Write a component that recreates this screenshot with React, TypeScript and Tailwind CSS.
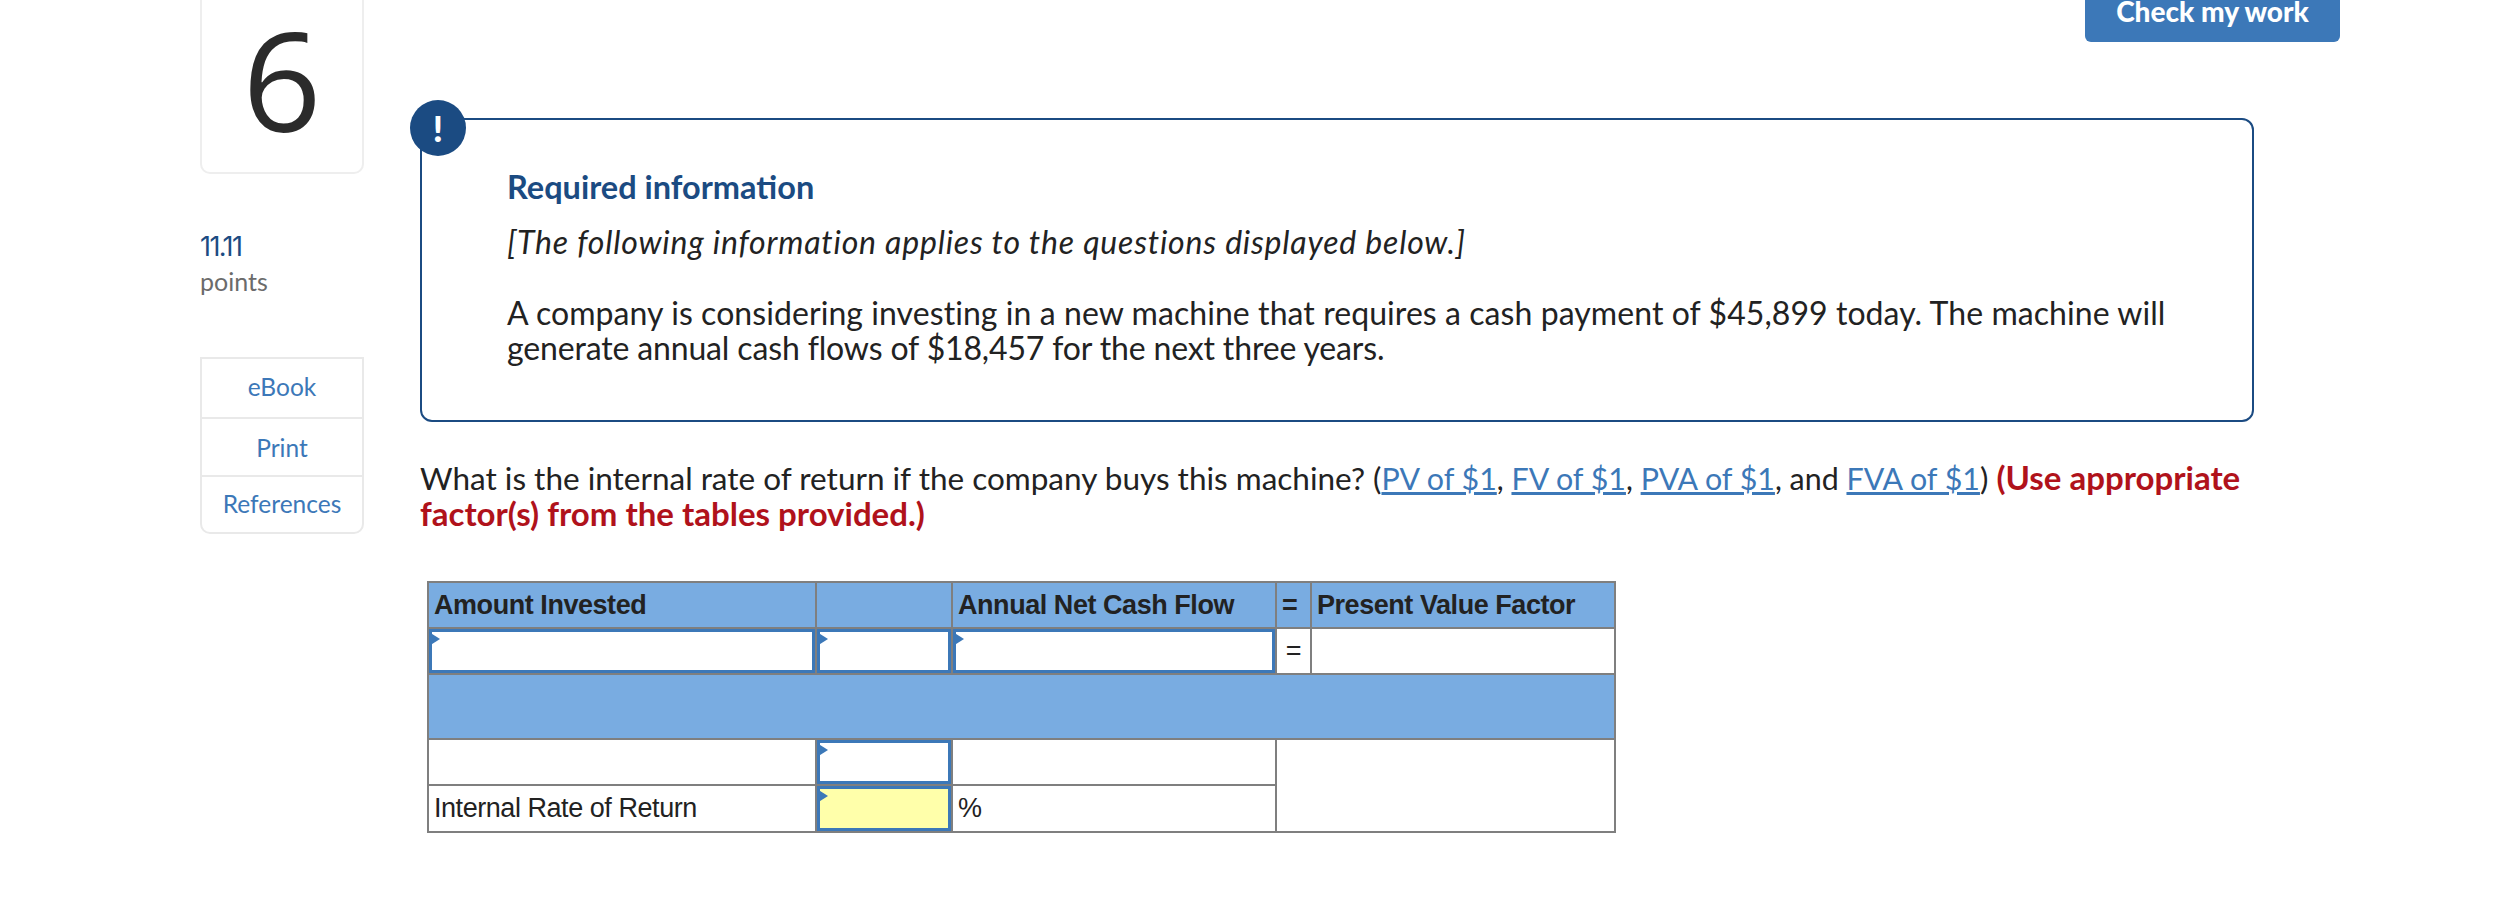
import React from 'react'

const body = { fontFamily: 'Lato, "Noto Sans", sans-serif' }
const arial = { fontFamily: '"Liberation Sans", Arial, sans-serif' }
const digit = { fontFamily: '"Open Sans", sans-serif' }
const inter = { fontFamily: 'Inter, sans-serif' }

function InputCell({ yellow = false, height }: { yellow?: boolean; height: string }) {
  return (
    <div className={`relative ${height} w-full border-[3px] border-[#3c78b8] ${yellow ? 'bg-[#ffffaa]' : 'bg-white'}`}>
      <svg className="absolute -left-[3px] top-0" width="11" height="14" viewBox="0 0 11 14">
        <path d="M0 0 L11 7 L0 14 Z" fill="#3c78b8" />
      </svg>
    </div>
  )
}

const th = 'border-2 border-[#7f7f7f] bg-[#79ace1] px-[5px] py-0 text-left font-bold text-[#222]'
const td = 'border-2 border-[#7f7f7f] bg-white px-[5px] py-0 text-[#222]'
const inputTd = 'border-2 border-[#7f7f7f] bg-white p-0'

function Sidebar() {
  return (
    <aside className="ml-[200px] w-[164px] shrink-0">
      <div className="flex h-[174px] items-center justify-center rounded-b-[10px] border-x-2 border-b-2 border-[#eeeeee] bg-white pb-[16px]">
        <span className="text-[138px] font-medium leading-[138px] text-[#2b2b2b]" style={digit}>6</span>
      </div>
      <div className="mt-[56px] text-[27px] leading-[34px] tracking-[-1.6px] text-[#1b4b82]" style={inter}>11.11</div>
      <div className="text-[25px] leading-[34px] text-[#6b6b6b]">points</div>
      <nav className="mt-[59px] flex flex-col rounded-b-[10px] border-2 border-[#e9e9e9] text-center text-[24.5px] text-[#3c78b8]">
        <a className="flex h-[60px] items-center justify-center border-b-2 border-[#e9e9e9] pb-[2px]">eBook</a>
        <a className="flex h-[58px] items-center justify-center border-b-2 border-[#e9e9e9] pt-[3px]">Print</a>
        <a className="flex h-[55px] items-center justify-center">References</a>
      </nav>
    </aside>
  )
}

function FactorTable() {
  return (
    <table className="ml-[7px] mt-[49px] w-[1189px] table-fixed border-collapse text-[27px] tracking-[-0.45px]" style={arial}>
      <colgroup>
        <col className="w-[388px]" />
        <col className="w-[136px]" />
        <col className="w-[324px]" />
        <col className="w-[35px]" />
        <col />
      </colgroup>
      <tbody>
        <tr className="h-[46px]">
          <td className={th}>Amount Invested</td>
          <td className={th}></td>
          <td className={th}>Annual Net Cash Flow</td>
          <td className={`${th} text-center`}>=</td>
          <td className={th}>Present Value Factor</td>
        </tr>
        <tr className="h-[46px]">
          <td className={inputTd}><InputCell height="h-[44px]" /></td>
          <td className={inputTd}><InputCell height="h-[44px]" /></td>
          <td className={inputTd}><InputCell height="h-[44px]" /></td>
          <td className={`${td} text-center`}>=</td>
          <td className={td}></td>
        </tr>
        <tr className="h-[65px]">
          <td colSpan={5} className={th}></td>
        </tr>
        <tr className="h-[46px]">
          <td className={td}></td>
          <td className={inputTd}><InputCell height="h-[44px]" /></td>
          <td className={td}></td>
          <td colSpan={2} rowSpan={2} className={td}></td>
        </tr>
        <tr className="h-[47px]">
          <td className={td}>Internal Rate of Return</td>
          <td className={inputTd}><InputCell yellow height="h-[45px]" /></td>
          <td className={td}>%</td>
        </tr>
      </tbody>
    </table>
  )
}

export default function App() {
  return (
    <div className="flex h-[916px] w-[2506px] overflow-hidden bg-white" style={body}>
      <Sidebar />
      <main className="ml-[56px] w-[1920px] shrink-0">
        <div className="flex justify-end">
          <button className="flex h-[42px] w-[255px] items-start justify-center rounded-b-[6px] bg-[#3c78b8] text-[28px] font-black leading-[22px] text-white">
            Check my work
          </button>
        </div>
        <section className="relative mt-[76px] h-[304px] w-[1834px] rounded-[12px] border-2 border-[#1b4b82] pl-[85px] pt-[47px] text-[#222]">
          <div className="absolute -left-[12px] -top-[20px] flex h-[56px] w-[56px] items-center justify-center rounded-full bg-[#1b4b82] text-[36px] font-black text-white">!</div>
          <h2 className="text-[32.5px] font-bold leading-[40px] text-[#1b4b82]">Required information</h2>
          <p className="mt-[15px] text-[32px] italic leading-[40px] tracking-[0.8px]">[The following information applies to the questions displayed below.]</p>
          <p className="mt-[33px] text-[32px] leading-[35px] tracking-[0.07px]">
            A company is considering investing in a new machine that requires a cash payment of $45,899 today. The machine will<br />
            <span className="tracking-[-0.15px]">generate annual cash flows of $18,457 for the next three years.</span>
          </p>
        </section>
        <p className="mt-[38px] w-[1834px] text-[31.5px] leading-[35px] text-[#222]">
          What is the internal rate of return if the company buys this machine? (
          <span className="text-[30.4px]">
            <a className="text-[#3c78b8] underline">PV of $1</a>, <a className="text-[#3c78b8] underline">FV of $1</a>,{' '}
            <a className="text-[#3c78b8] underline">PVA of $1</a>, and <a className="text-[#3c78b8] underline">FVA of $1</a>
          </span>
          ){' '}
          <strong className="text-[33px] text-[#b0121b]">(Use appropriate<br />factor(s) from the tables provided.)</strong>
        </p>
        <FactorTable />
      </main>
    </div>
  )
}
